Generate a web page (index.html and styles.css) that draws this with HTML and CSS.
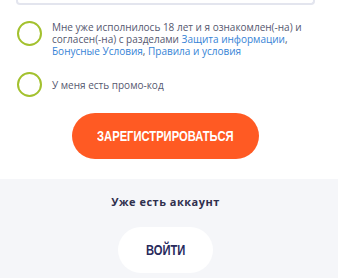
FILE: index.html
```html
<!DOCTYPE html>
<html lang="ru">
<head>
<meta charset="utf-8">
<link rel="stylesheet" href="styles.css">
</head>
<body>
<div class="form">
  <div class="input-tail"></div>
  <div class="check-row first">
    <span class="radio"></span>
    <p class="check-text">Мне уже исполнилось 18 лет и я ознакомлен(-на) и согласен(-на) с разделами <a href="#">Защита информации</a>, <a href="#">Бонусные Условия</a>, <a href="#">Правила и условия</a></p>
  </div>
  <div class="check-row second">
    <span class="radio"></span>
    <p class="check-text">У меня есть промо-код</p>
  </div>
  <div class="btn-wrap">
    <button class="btn btn-primary"><span class="btn-label">ЗАРЕГИСТРИРОВАТЬСЯ</span></button>
  </div>
</div>
<div class="login">
  <div class="login-inner">
    <p class="login-title">Уже есть аккаунт</p>
    <button class="btn btn-login"><span class="btn-label">ВОЙТИ</span></button>
  </div>
</div>
</body>
</html>
```
FILE: styles.css
```css
html, body {
  margin: 0;
  padding: 0;
  background: #ffffff;
}
body {
  font-family: "Open Sans", "Noto Sans", sans-serif;
  width: 338px;
  height: 278px;
  overflow: hidden;
}
.form {
  padding: 0 23px 0 16px;
}
.input-tail {
  height: 3px;
  border: 2px solid #e3e5ee;
  border-top: none;
  border-radius: 0 0 4px 4px;
}
.check-row {
  display: flex;
  gap: 10px;
  padding-left: 1px;
}
.check-row.first {
  margin-top: 16px;
  align-items: flex-start;
}
.check-row.second {
  margin-top: 15px;
  align-items: center;
}
.radio {
  flex: none;
  width: 21px;
  height: 21px;
  border: 2.5px solid #a3c12e;
  border-radius: 50%;
}
.check-text {
  margin: 0;
  font-size: 10px;
  line-height: 12px;
  color: #55576f;
}
.check-text a {
  color: #3583d6;
  text-decoration: none;
}
.btn-wrap {
  display: flex;
  justify-content: center;
  margin-top: 16px;
}
.btn {
  border: none;
  height: 46px;
  border-radius: 23px;
  font-family: "Liberation Sans", "Arial", sans-serif;
  font-weight: 700;
  font-size: 14px;
  padding: 0;
  cursor: pointer;
  display: flex;
  align-items: center;
  justify-content: center;
}
.btn-label {
  display: inline-block;
  transform: scaleX(0.8);
  white-space: nowrap;
}
.btn-primary {
  width: 187px;
  background: #ff5a23;
  color: #ffffff;
}
.login {
  margin-top: 20px;
  background: #f5f6f9;
  height: 99px;
}
.login-inner {
  padding: 15px 23px 0 16px;
  display: flex;
  flex-direction: column;
  align-items: center;
}
.login-title {
  margin: 0;
  font-size: 11px;
  line-height: 16px;
  font-weight: 700;
  letter-spacing: 0.5px;
  color: #2f2f4d;
}
.btn-login {
  margin-top: 17px;
  width: 95px;
  background: #ffffff;
  color: #282a5c;
}
```
